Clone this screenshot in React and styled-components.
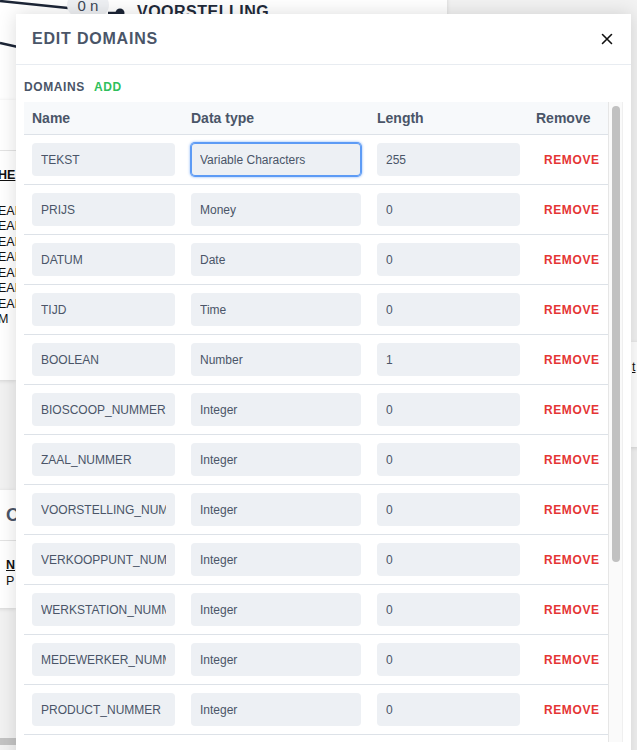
import React from "react";
import styled, { createGlobalStyle } from "styled-components";

const Global = createGlobalStyle`
  html, body { margin: 0; padding: 0; }
  body {
    background: #f2f2f2;
    font-family: "Liberation Sans", Arial, sans-serif;
    overflow: hidden;
  }
`;

const Canvas = styled.div`
  position: relative;
  width: 637px;
  height: 750px;
  overflow: hidden;
  background: #f2f2f2;
`;

const Node = styled.div`
  position: absolute;
  background: #ffffff;
  box-shadow: 0 1px 4px rgba(0, 0, 0, 0.12);
  color: #111;
  font-size: 14px;
`;

const NodeTitle = styled.div`
  font-weight: 700;
  font-size: ${(p) => p.$size || 16}px;
  color: ${(p) => p.$color || "#1f2a3a"};
  letter-spacing: 0.5px;
`;

const NodeLine = styled.div`
  font-size: 12.5px;
  line-height: 15.5px;
  color: #111;
  font-weight: ${(p) => (p.$bold ? 700 : 400)};
  text-decoration: ${(p) => (p.$u ? "underline" : "none")};
`;

const NodeDivider = styled.div`
  height: 1px;
  background: #e3e3e3;
`;

const Pill = styled.div`
  position: absolute;
  width: 42px;
  height: 24px;
  border-radius: 12px;
  background: #eef0f3;
  color: #3c4656;
  font-size: 15px;
  display: flex;
  align-items: center;
  justify-content: center;
`;

const HScroll = styled.div`
  position: absolute;
  left: 0;
  top: 738px;
  width: 16px;
  height: 7px;
  background: #c3c3c3;
`;

const Modal = styled.div`
  position: absolute;
  left: 16px;
  top: 14px;
  width: 615px;
  height: 760px;
  background: #ffffff;
  box-shadow: 0 0 18px rgba(0, 0, 0, 0.14);
  display: flex;
  flex-direction: column;
`;

const Header = styled.div`
  height: 50px;
  border-bottom: 1px solid #e8ecf1;
  display: flex;
  align-items: center;
  justify-content: space-between;
  padding: 0 18px 0 16px;
  flex-shrink: 0;
`;

const Title = styled.h2`
  margin: 0;
  font-size: 16px;
  font-weight: 700;
  letter-spacing: 0.8px;
  color: #4a5568;
`;

const Close = styled.button`
  border: none;
  background: none;
  padding: 0;
  width: 12px;
  height: 12px;
  display: flex;
  cursor: pointer;
`;

const Body = styled.div`
  padding: 15px 8px 0 8px;
  display: flex;
  flex-direction: column;
`;

const Label = styled.div`
  display: flex;
  gap: 9px;
  height: 14px;
  line-height: 14px;
  margin-bottom: 8px;
  font-size: 12px;
  font-weight: 700;
  letter-spacing: 0.6px;
  color: #4a5568;
`;

const AddLink = styled.span`
  color: #2fbf5b;
  cursor: pointer;
`;

const ScrollArea = styled.div`
  display: flex;
  width: 599px;
  height: 640px;
  overflow: hidden;
`;

const Viewport = styled.div`
  width: 584px;
  flex-shrink: 0;
  overflow: hidden;
`;

const Track = styled.div`
  width: 15px;
  box-sizing: border-box;
  background: #fafafa;
  border-left: 1px solid #e6e6e6;
  border-right: 1px solid #efefef;
  padding: 4px 2px 0 3px;
`;

const Thumb = styled.div`
  height: 456px;
  border-radius: 4px;
  background: #c1c1c1;
`;

const Grid = styled.div`
  display: grid;
  grid-template-columns: 159px 186px 159px 80px;
`;

const HeadCell = styled.div`
  height: 32px;
  background: #f7f9fb;
  border-bottom: 1px solid #dde2e8;
  display: flex;
  align-items: center;
  padding-left: 8px;
  font-size: 14px;
  font-weight: 700;
  color: #4a5568;
`;

const Cell = styled.div`
  height: 49px;
  border-bottom: 1px solid #dde2e8;
  display: flex;
  align-items: center;
  padding: 0 8px;
  box-sizing: content-box;
`;

const RemoveCell = styled(Cell)`
  padding-left: 16px;
`;

const Field = styled.input`
  width: 100%;
  height: 33px;
  box-sizing: border-box;
  border: none;
  border-radius: 4px;
  background: #edf0f4;
  padding: 0 9px;
  font-family: "Liberation Sans", Arial, sans-serif;
  font-size: 12px;
  color: #4a5568;
  outline: none;
  box-shadow: ${(p) =>
    p.$focused
      ? "0 0 0 1px #5d9bf5, inset 0 0 0 1px #5d9bf5, 0 0 2px 2px rgba(93,155,245,0.35)"
      : "none"};
`;

const Remove = styled.span`
  font-size: 12px;
  font-weight: 700;
  letter-spacing: 0.6px;
  color: #e53535;
  cursor: pointer;
`;

const domains = [
  ["TEKST", "Variable Characters", "255"],
  ["PRIJS", "Money", "0"],
  ["DATUM", "Date", "0"],
  ["TIJD", "Time", "0"],
  ["BOOLEAN", "Number", "1"],
  ["BIOSCOOP_NUMMER", "Integer", "0"],
  ["ZAAL_NUMMER", "Integer", "0"],
  ["VOORSTELLING_NUMMER", "Integer", "0"],
  ["VERKOOPPUNT_NUMMER", "Integer", "0"],
  ["WERKSTATION_NUMMER", "Integer", "0"],
  ["MEDEWERKER_NUMMER", "Integer", "0"],
  ["PRODUCT_NUMMER", "Integer", "0"],
];

export default function App() {
  return (
    <Canvas>
      <Global />
      {/* background diagram */}
      <Node style={{ left: -300, top: -200, width: 747, height: 300 }}>
        <svg
          width="747"
          height="300"
          style={{ position: "absolute", left: 0, top: 0 }}
        >
          <path d="M300 201 L368 208" stroke="#1c2536" strokeWidth="2.5" fill="none" />
          <path d="M300 243 L318 247" stroke="#1c2536" strokeWidth="2.5" fill="none" />
          <path d="M408 213 L420 213" stroke="#1c2536" strokeWidth="2.5" fill="none" />
          <circle cx="420" cy="213" r="4.5" fill="#1c2536" />
        </svg>
        <Pill style={{ left: 367, top: 193 }}>0 n</Pill>
        <NodeTitle style={{ position: "absolute", left: 437, top: 203 }}>
          VOORSTELLING
        </NodeTitle>
      </Node>
      <Node style={{ left: -200, top: 100, width: 216, height: 280 }}>
        <div style={{ height: 50 }} />
        <NodeDivider />
        <div style={{ padding: "17px 0 0 198px" }}>
          <NodeLine $bold $u>HE</NodeLine>
          <div style={{ height: 20 }} />
          {["EAN", "EAN", "EAN", "EAN", "EAN", "EAN", "EAN", "M"].map((t, i) => (
            <NodeLine key={i}>{t}</NodeLine>
          ))}
        </div>
      </Node>
      <Node style={{ left: -200, top: 490, width: 216, height: 118 }}>
        <div style={{ height: 50, display: "flex", alignItems: "center", paddingLeft: 206 }}>
          <NodeTitle $size={18} $color="#4a5568">O</NodeTitle>
        </div>
        <NodeDivider />
        <div style={{ padding: "17px 0 0 206px" }}>
          <NodeLine $bold $u>N</NodeLine>
          <NodeLine>P</NodeLine>
        </div>
      </Node>
      <Node style={{ left: 629, top: 342, width: 200, height: 105 }}>
        <div style={{ padding: "18px 0 0 3px" }}>
          <NodeLine $u>t</NodeLine>
        </div>
      </Node>
      <HScroll />

      {/* modal */}
      <Modal>
        <Header>
          <Title>EDIT DOMAINS</Title>
          <Close aria-label="Close">
            <svg width="12" height="12" viewBox="0 0 12 12">
              <path
                d="M1.5 1.5 L10.5 10.5 M10.5 1.5 L1.5 10.5"
                stroke="#111"
                strokeWidth="1.6"
                strokeLinecap="round"
              />
            </svg>
          </Close>
        </Header>
        <Body>
          <Label>
            <span>DOMAINS</span>
            <AddLink>ADD</AddLink>
          </Label>
          <ScrollArea>
            <Viewport>
              <Grid>
                <HeadCell>Name</HeadCell>
                <HeadCell>Data type</HeadCell>
                <HeadCell>Length</HeadCell>
                <HeadCell>Remove</HeadCell>
                {domains.map(([name, type, len], i) => (
                  <React.Fragment key={name}>
                    <Cell>
                      <Field defaultValue={name} readOnly />
                    </Cell>
                    <Cell>
                      <Field defaultValue={type} readOnly $focused={i === 0} />
                    </Cell>
                    <Cell>
                      <Field defaultValue={len} readOnly />
                    </Cell>
                    <RemoveCell>
                      <Remove>REMOVE</Remove>
                    </RemoveCell>
                  </React.Fragment>
                ))}
              </Grid>
            </Viewport>
            <Track>
              <Thumb />
            </Track>
          </ScrollArea>
        </Body>
      </Modal>
    </Canvas>
  );
}
